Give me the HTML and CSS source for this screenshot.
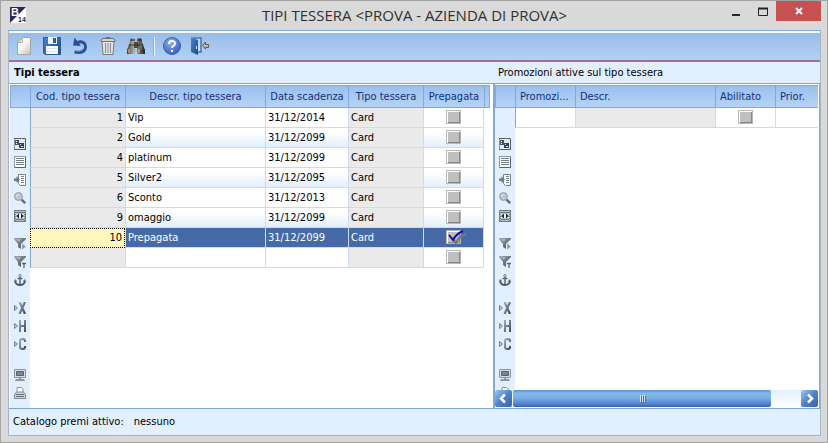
FILE: index.html
```html
<!DOCTYPE html>
<html lang="it">
<head>
<meta charset="utf-8">
<title>Tipi tessera</title>
<link rel="stylesheet" href="styles.css">
</head>
<body>
<svg class="defs" aria-hidden="true">
  <defs>
    <linearGradient id="gPage" x1="0" y1="0" x2="1" y2="1"><stop offset="0" stop-color="#fff"/><stop offset=".5" stop-color="#f4f4f0"/><stop offset="1" stop-color="#c4c4bc"/></linearGradient>
    <linearGradient id="gBlue" x1="0" y1="0" x2="1" y2="1"><stop offset="0" stop-color="#4a86cf"/><stop offset="1" stop-color="#1d4688"/></linearGradient>
    <radialGradient id="gHelp" cx=".4" cy=".3" r=".8"><stop offset="0" stop-color="#8fb2f2"/><stop offset="1" stop-color="#2a52b4"/></radialGradient>
    <linearGradient id="gGrey" x1="0" y1="0" x2="1" y2="1"><stop offset="0" stop-color="#a3abb5"/><stop offset="1" stop-color="#3d4751"/></linearGradient>
    <linearGradient id="gBin" x1="0" y1="0" x2="1" y2="0"><stop offset="0" stop-color="#3c3a36"/><stop offset=".35" stop-color="#b5b1a6"/><stop offset="1" stop-color="#23211e"/></linearGradient>
    <symbol id="i-form" viewBox="0 0 12 12"><rect x=".5" y=".5" width="11" height="11" fill="#e4e9ee" stroke="#8b96a1"/><path d="M0 .5h7M8 .5h3M11.500 1v11M0 11.500h12" stroke="#525d68"/><path d="M1 2h4v5h-4z" fill="#4a545f"/><path d="M2 3.500h1M2 5.500h1" stroke="#fff"/><path d="M5 5h5v5h-5z" fill="#39434d"/><path d="M6 6.500h1M7 8.500h2" stroke="#dfe4ea"/></symbol>
    <symbol id="i-list" viewBox="0 0 12 12"><rect x=".5" y=".5" width="11" height="11" fill="#fff" stroke="#8e969f"/><path d="M2 2.500h8M2 4.500h8M2 6.500h8M2 8.500h8" stroke="#707b86"/><path d="M11.500 1v10.500H1" fill="none" stroke="#58626d"/></symbol>
    <symbol id="i-insert" viewBox="0 0 12 12"><path d="M4.500.5h7v11h-5l-2-2z" fill="#fff" stroke="#76818c"/><path d="M7 2.500h3M7 4.500h3M7 6.500h3M7 8.500h3" stroke="#77828d"/><path d="M0 4.500h2.500V2L6 5.700 2.500 9V7H0z" fill="#6f7b87"/></symbol>
    <symbol id="i-search" viewBox="0 0 12 12"><path d="M7.500 7.500l3.700 3.700" stroke="#606b76" stroke-width="2.400"/><circle cx="4.500" cy="4.500" r="3.900" fill="#bdc7cf" stroke="#8e98a2"/><path d="M2.500 4.500a2 2 0 0 1 2-2" stroke="#eef3f6" fill="none"/></symbol>
    <symbol id="i-width" viewBox="0 0 12 12"><path fill="#717c87" d="M0 0h12v12H0z"/><path d="M2 1.500h8M2 3.500h8M2 8.500h8M2 10.500h8" stroke="#b4bcc4"/><path d="M1.500 1v10M10.500 1v10" stroke="#c2cad1" stroke-dasharray="1 1"/><path d="M2 4h8v4H2z" fill="#eef1f4"/><path d="M2 6l3-2.500v5zM10 6L7 3.500v5z" fill="#252c33"/></symbol>
    <symbol id="i-funnel-next" viewBox="0 0 12 12"><path d="M0 0h12v1L7 6v5l-3-2V6L0 1z" fill="url(#gGrey)"/><path d="M2 1h5L5 4z" fill="#a9b2bb"/><path d="M8 5l4 3.500L8 12z" fill="#89939e" stroke="#e3f0ff" stroke-width=".5"/></symbol>
    <symbol id="i-funnel-text" viewBox="0 0 12 12"><path d="M0 0h12v1L7 6v5l-3-2V6L0 1z" fill="url(#gGrey)"/><path d="M2 1h5L5 4z" fill="#a9b2bb"/><path d="M8 7.500h4M10 7v5" stroke="#59646f" stroke-width="1.300"/></symbol>
    <symbol id="i-anchor" viewBox="0 0 12 12"><circle cx="6" cy="1.700" r="1.200" fill="none" stroke="#75808b"/><path d="M6 3v8M3.500 4.500h5" stroke="#5c6873" stroke-width="1.500"/><path d="M1 7c.5 3 2.500 4 5 4s4.500-1 5-4" fill="none" stroke="#4c5864" stroke-width="1.800"/><path d="M0 8l1-3 2.500 2.500zM12 8l-1-3-2.500 2.500z" fill="#5c6873"/></symbol>
    <symbol id="i-x" viewBox="0 0 12 12"><path d="M.5 3.500L3.500 6l-3 2.500z" fill="#c2cbd4" stroke="#78838e"/><path d="M5.500 0l5.500 12M11 0L5.500 12" stroke="url(#gGrey)" stroke-width="2.200"/></symbol>
    <symbol id="i-h" viewBox="0 0 12 12"><path d="M.5 3.500L3.500 6l-3 2.500z" fill="#c2cbd4" stroke="#78838e"/><path d="M5 0h2v5h3V0h2v12h-2V7H7v5H5z" fill="url(#gGrey)"/></symbol>
    <symbol id="i-c" viewBox="0 0 12 12"><path d="M.5 3.500L3.500 6l-3 2.500z" fill="#c2cbd4" stroke="#78838e"/><path d="M11 4V3Q11 1 8.500 1T6 3v6q0 2 2.500 2T11 9V8" fill="none" stroke="url(#gGrey)" stroke-width="2"/></symbol>
    <symbol id="i-screen" viewBox="0 0 12 12"><path d="M.5.500h11v8H.5z" fill="#d6dce2" stroke="#8c96a0"/><path d="M2.500 2.500h7v4h-7z" fill="#7c8793" stroke="#56616c"/><path d="M5 9h2v1h3l1 2H1l1-2h3z" fill="#8c96a1"/></symbol>
    <symbol id="i-print" viewBox="0 0 12 12"><path d="M3 5V.5h4.500L9 2v3" fill="#fff" stroke="#8a949e"/><path d="M.5 8l2-3h7l2 3v3.500H.5z" fill="#d0d6dc" stroke="#7e8893"/><path d="M2 7.500h8M2 9.500h8" stroke="#5f6a75"/></symbol>
  </defs>
</svg>

<div class="window">
  <header class="titlebar">
    <svg class="app-icon" viewBox="0 0 16 16" aria-hidden="true">
      <path fill="#fff" d="M0 0h16v16H0z"/><path fill="#2a2859" d="M0 0h16L0 16z"/>
      <text x="1" y="9" class="logo-b">B</text><text x="8" y="15" class="logo-n">14</text>
    </svg>
    <h1>TIPI TESSERA &lt;PROVA - AZIENDA DI PROVA&gt;</h1>
    <div class="window-buttons">
      <button type="button" aria-label="Riduci"><svg width="12" height="12" viewBox="0 0 12 12"><path d="M2 9h8v2H2z" fill="#222"/></svg></button>
      <button type="button" aria-label="Ingrandisci"><svg width="12" height="12" viewBox="0 0 12 12"><path d="M1.500 4V3.500h9v7h-9z" fill="none" stroke="#222"/><path d="M1 3.500h10" stroke="#222" stroke-width="2"/></svg></button>
      <button type="button" class="close" aria-label="Chiudi"><svg width="12" height="12" viewBox="0 0 12 12"><path d="M3 3l6 6M9 3L3 9" stroke="#fff" stroke-width="2"/></svg></button>
    </div>
  </header>

  <main class="client">
    <nav class="toolbar" aria-label="Comandi">
      <div class="tools">
        <button type="button" aria-label="Nuovo"><svg viewBox="0 0 18 18"><path d="M7 .5h8.500v17h-13V5z" fill="url(#gPage)" stroke="#a5a79f"/><path d="M7.500.5v5h-5z" fill="#dcdcd6" stroke="#b5b5ad"/></svg></button>
        <button type="button" aria-label="Salva"><svg viewBox="0 0 18 18"><path d="M.5.500h17v17H2l-1.500-1.500z" fill="url(#gBlue)" stroke="#2c5a9f"/><path d="M5 0h9v7H5z" fill="#eaf2fa"/><path d="M10 1h3v5h-3z" fill="#2c5ba3"/><path d="M3 9h12v8H3z" fill="#fafdff"/><path d="M4 11.500h10M4 14.500h10" stroke="#d9e5ef"/></svg></button>
        <button type="button" aria-label="Annulla"><svg viewBox="0 0 18 18"><path d="M6.500 5.500C11 3.500 14.500 6 14.500 10s-4 7-11 5" fill="none" stroke="#2b4f92" stroke-width="2.800"/><path d="M2 8.500L3.500.5l6.500 8.500z" fill="#2b4f92"/><path d="M4 13.500q5 1.500 8-1" fill="none" stroke="#6d94d0"/></svg></button>
        <button type="button" aria-label="Elimina"><svg viewBox="0 0 18 18"><path d="M3 4h12l-1 13.500H4z" fill="#e2e4e5" stroke="#767b80"/><path d="M6.500 6v10M9 6v10M11.500 6v10" stroke="#858a90"/><path d="M2 4.500V3l2-1.500h10L16 3v1.500z" fill="#d0d3d6" stroke="#6e7377"/><path d="M7 1.500v-1h4v1" fill="none" stroke="#6e7377"/></svg></button>
        <button type="button" aria-label="Cerca"><svg viewBox="0 0 18 18"><path d="M4 1h3l1 4v10l-1 2H0v-4L3 5zM14 1h-3l-1 4v10l1 2h7v-4l-3-8z" fill="url(#gBin)"/><path d="M7 5h4v6H7z" fill="#4b4942"/><path d="M3 3h5M10 3h5M2 8h6M10 8h6" stroke="#191815"/><path d="M2 12v4M12 12v4" stroke="#d0c9b9"/><path d="M5 6v9M14 6v6" stroke="#858177"/></svg></button>
      </div>
      <span class="divider"></span>
      <div class="tools">
        <button type="button" aria-label="Guida"><svg viewBox="0 0 18 18"><circle cx="9" cy="9" r="8.500" fill="url(#gHelp)" stroke="#3a61b2"/><path d="M6 7c0-4 6-4 6-.5C12 9 9 8.500 9 11" fill="none" stroke="#fff" stroke-width="2"/><circle cx="9" cy="14" r="1.200" fill="#fff"/></svg></button>
        <button type="button" aria-label="Esci"><svg viewBox="0 0 18 18"><path d="M2 1h8v14H7" fill="#c3d8f2" stroke="#4a72b4" stroke-width="1.500"/><path d="M0 0l7 3v15l-7-3z" fill="url(#gBlue)"/><path d="M5.500 9v3" stroke="#dfe9f8"/><path d="M11.500 8.500L14.500 5v2.500h3v3h-3V12z" fill="#c2b9a3" stroke="#5d5a52"/></svg></button>
      </div>
    </nav>

    <div class="panels">
      <section class="panel">
        <h2 class="strong">Tipi tessera</h2>
        <div class="grid">
          <div class="strip">
            <div class="strip-head"></div>
            <div class="strip-icons">
              <div><svg><use href="#i-form"/></svg><svg><use href="#i-list"/></svg><svg><use href="#i-insert"/></svg><svg><use href="#i-search"/></svg><svg><use href="#i-width"/></svg></div>
              <div><svg><use href="#i-funnel-next"/></svg><svg><use href="#i-funnel-text"/></svg><svg><use href="#i-anchor"/></svg></div>
              <div><svg><use href="#i-x"/></svg><svg><use href="#i-h"/></svg><svg><use href="#i-c"/></svg></div>
              <div><svg><use href="#i-screen"/></svg><svg><use href="#i-print"/></svg></div>
            </div>
          </div>
          <div class="sheet">
            <table class="cards">
              <colgroup><col class="w95"><col class="w140"><col class="w83"><col class="w75"><col class="w61"><col></colgroup>
              <thead><tr><th>Cod. tipo tessera</th><th>Descr. tipo tessera</th><th>Data scadenza</th><th>Tipo tessera</th><th>Prepagata</th><td class="rest"></td></tr></thead>
              <tbody>
                <tr><td class="num off">1</td><td>Vip</td><td>31/12/2014</td><td class="off">Card</td><td class="tick"><input type="checkbox" aria-label="Prepagata, Vip"></td></tr>
                <tr><td class="num off">2</td><td>Gold</td><td>31/12/2099</td><td class="off">Card</td><td class="tick"><input type="checkbox" aria-label="Prepagata, Gold"></td></tr>
                <tr><td class="num off">4</td><td>platinum</td><td>31/12/2099</td><td class="off">Card</td><td class="tick"><input type="checkbox" aria-label="Prepagata, platinum"></td></tr>
                <tr><td class="num off">5</td><td>Silver2</td><td>31/12/2095</td><td class="off">Card</td><td class="tick"><input type="checkbox" aria-label="Prepagata, Silver2"></td></tr>
                <tr><td class="num off">6</td><td>Sconto</td><td>31/12/2013</td><td class="off">Card</td><td class="tick"><input type="checkbox" aria-label="Prepagata, Sconto"></td></tr>
                <tr><td class="num off">9</td><td>omaggio</td><td>31/12/2099</td><td class="off">Card</td><td class="tick"><input type="checkbox" aria-label="Prepagata, omaggio"></td></tr>
                <tr class="selected"><td class="num current">10</td><td>Prepagata</td><td>31/12/2099</td><td>Card</td><td class="tick"><input type="checkbox" checked aria-label="Prepagata, Prepagata"><svg class="mark" viewBox="0 0 20 15" aria-hidden="true"><path d="M7 9l3 4Q13 6 20 4" fill="none" stroke="#77777d" stroke-width="2.500"/><path d="M3 5l4 5Q10 4 17 1" fill="none" stroke="#1212a0" stroke-width="2"/></svg></td></tr>
                <tr><td class="off"></td><td></td><td></td><td class="off"></td><td class="tick"><input type="checkbox" aria-label="Prepagata, nuova riga"></td></tr>
              </tbody>
            </table>
          </div>
        </div>
      </section>

      <section class="panel second">
        <h2>Promozioni attive sul tipo tessera</h2>
        <div class="grid">
          <div class="strip">
            <div class="strip-head"></div>
            <div class="strip-icons">
              <div><svg><use href="#i-form"/></svg><svg><use href="#i-list"/></svg><svg><use href="#i-insert"/></svg><svg><use href="#i-search"/></svg><svg><use href="#i-width"/></svg></div>
              <div><svg><use href="#i-funnel-next"/></svg><svg><use href="#i-funnel-text"/></svg><svg><use href="#i-anchor"/></svg></div>
              <div><svg><use href="#i-x"/></svg><svg><use href="#i-h"/></svg><svg><use href="#i-c"/></svg></div>
              <div><svg><use href="#i-screen"/></svg><svg><use href="#i-print"/></svg></div>
            </div>
          </div>
          <div class="sheet">
            <table class="promos">
              <colgroup><col class="w60"><col class="w140"><col class="w60"><col></colgroup>
              <thead><tr><th>Promozi...</th><th>Descr.</th><th>Abilitato</th><th>Prior.</th></tr></thead>
              <tbody><tr><td></td><td class="off"></td><td class="tick"><input type="checkbox" aria-label="Abilitato"></td><td></td></tr></tbody>
            </table>
          </div>
        </div>
        <div class="scrollbar">
          <button type="button" aria-label="Scorri a sinistra"><svg viewBox="0 0 17 17"><path d="M10 4.500l-4 4 4 4" fill="none" stroke="#fff" stroke-width="2.500"/></svg></button>
          <div class="track"><div class="thumb"><i></i><i></i><i></i></div></div>
          <button type="button" aria-label="Scorri a destra"><svg viewBox="0 0 17 17"><path d="M7 4.500l4 4-4 4" fill="none" stroke="#fff" stroke-width="2.500"/></svg></button>
        </div>
      </section>
    </div>

    <footer class="status"><span>Catalogo premi attivo:</span><span>nessuno</span></footer>
  </main>
</div>
</body>
</html>
```
FILE: styles.css
```css
* { box-sizing: border-box; }

body {
  margin: 0;
  font: 11px/16px "DejaVu Sans Condensed", Tahoma, "Noto Sans", sans-serif;
  color: #000;
}

button {
  padding: 0;
  border: 0;
  background: none;
  font: inherit;
}

svg { display: block; }
.defs { position: absolute; width: 0; height: 0; }

.window {
  display: flex;
  flex-direction: column;
  min-height: 100vh;
  padding: 0 6px 6px 7px;
  border: 1px solid #a2a2a2;
  background: #d9d9d9;
}

/* Title bar */
.titlebar {
  display: grid;
  grid-template-columns: 1fr auto 1fr;
  height: 29px;
}

.app-icon { width: 16px; height: 16px; margin: 6px 2px; }
.logo-b { font: bold 11px "Liberation Sans", sans-serif; fill: #fff; }
.logo-n { font: bold 7px "Liberation Sans", sans-serif; fill: #2a2859; }

h1 {
  margin: 0;
  font: 15px/29px "Open Sans", "Noto Sans", sans-serif;
  color: #303030;
}

.window-buttons { display: flex; justify-content: flex-end; align-items: flex-start; }
.window-buttons button {
  display: flex;
  align-items: center;
  justify-content: center;
  width: 27px;
  height: 20px;
}
.window-buttons .close { width: 45px; background: #c75050; }

/* Client area */
.client {
  display: flex;
  flex: 1;
  flex-direction: column;
  border: 1px solid #a3b5c6;
  border-top-color: #83a9d6;
  background: #e1efff;
}

.toolbar {
  display: flex;
  gap: 8px;
  height: 31px;
  padding: 4px 6px;
  border-top: 2px solid #f4f9ff;
  border-bottom: 2px solid #9d7098;
  background: linear-gradient(#98bcea, #b3d1f3);
}

.tools { display: flex; gap: 10px; }
.tools button, .tools svg { width: 18px; height: 18px; }
.divider { width: 2px; align-self: stretch; border-left: 1px solid #8fb0dc; background: #e9f3ff; }

.panels {
  display: grid;
  flex: 1;
  grid-template-columns: 484fr 327fr;
  border-bottom: 1px solid #7ba5d4;
}

.panel { display: flex; flex-direction: column; min-width: 0; }

h2 {
  height: 22px;
  margin: 0;
  padding: 3px 5px;
  border-bottom: 1px solid #7ba5d4;
  font-size: 11px;
  font-weight: normal;
  line-height: 16px;
}
h2.strong { font-weight: bold; }

.grid {
  display: flex;
  flex: 1;
  padding: 1px 3px 0 1px;
  background: #fff;
}
.second .grid, .second .scrollbar { border-left: 2px solid #83a8d9; border-right: 1px solid #83a8d9; }
.second .grid { padding: 1px 1px 0 0; }

.strip { display: flex; flex-direction: column; width: 20px; background: #e1efff; }
.strip-head {
  height: 23px;
  border: 1px solid #83a8d9;
  border-right: 0;
  background: linear-gradient(#9bbfed, #b5d3f6);
}
.strip-icons {
  display: flex;
  flex: 1 1 0;
  flex-direction: column;
  gap: 16px;
  min-height: 0;
  padding: 30px 4px 0;
  overflow: hidden;
}
.strip-icons div { display: flex; flex-direction: column; gap: 6px; }
.strip-icons div:last-child { padding-top: 3px; }
.strip-icons svg { width: 12px; height: 12px; }

.sheet { flex: 1; min-width: 0; }

table { width: 100%; border-collapse: separate; border-spacing: 0; table-layout: fixed; }
.w60 { width: 60px; }
.w61 { width: 61px; }
.w75 { width: 75px; }
.w83 { width: 83px; }
.w95 { width: 95px; }
.w140 { width: 140px; }

th, .rest {
  height: 23px;
  padding: 0 4px;
  border: 1px solid #83a8d9;
  border-right: 0;
  background: linear-gradient(#9bbfed, #b5d3f6);
  color: #12307c;
  font-weight: normal;
  text-align: center;
  white-space: nowrap;
}
.cards th { padding: 0; }
.rest { border-right: 1px solid #83a8d9; }
.promos th { text-align: left; }

tbody td {
  height: 20px;
  padding: 0 2px;
  border-bottom: 1px solid #ccdbef;
  border-left: 1px solid #ccdbef;
  line-height: 16px;
  white-space: nowrap;
}
tbody td:first-child { border-left-color: #83a8d9; }
.cards tbody .tick { border-right: 1px solid #ccdbef; }
tbody tr:nth-child(even) td { background: linear-gradient(#fff 25%, #e2effc); }
tbody tr:last-child td { background: #fff; }
tbody tr td.off, tbody tr:nth-child(even) td.off { background: #eaeaea; }
.num { text-align: right; }
tbody .tick { position: relative; padding: 0 0 1px; text-align: center; }
.selected td { background: #4669a8; color: #fff; }
.selected .current { border: 1px dotted #000; background: #fff7bd; color: #000; }

input[type="checkbox"] {
  display: block;
  width: 15px;
  height: 14px;
  margin: 0 auto;
  appearance: none;
  border: 1px solid #b7b7b7;
  background: #c0c0c0;
  box-shadow: inset 1px 1px #fff, inset -1px -1px #858585;
}
.mark { position: absolute; top: 2px; left: 22px; width: 20px; height: 15px; pointer-events: none; }

/* Horizontal scrollbar */
.scrollbar { display: flex; height: 18px; padding-right: 1px; background: #fff; }
.scrollbar button {
  width: 17px;
  height: 17px;
  border-radius: 2px;
  background: linear-gradient(135deg, #9cc5ef, #4f82c9 50%, #3c62ad);
}
.track { flex: 1; padding: 0 1px; background: linear-gradient(#e4effb, #fff); }
.thumb {
  display: flex;
  align-items: center;
  justify-content: center;
  gap: 1px;
  width: 90%;
  height: 17px;
  border-radius: 2px;
  background: linear-gradient(#5c8fd2, #86b9ec 20%, #76abe5 50%, #5585cc 80%, #3c60ac);
}
.thumb i { width: 1px; height: 7px; background: #d2e5fa; box-shadow: 1px 1px #446fb5; }

.status { display: flex; gap: 10px; height: 26px; padding: 5px 4px; }
```
